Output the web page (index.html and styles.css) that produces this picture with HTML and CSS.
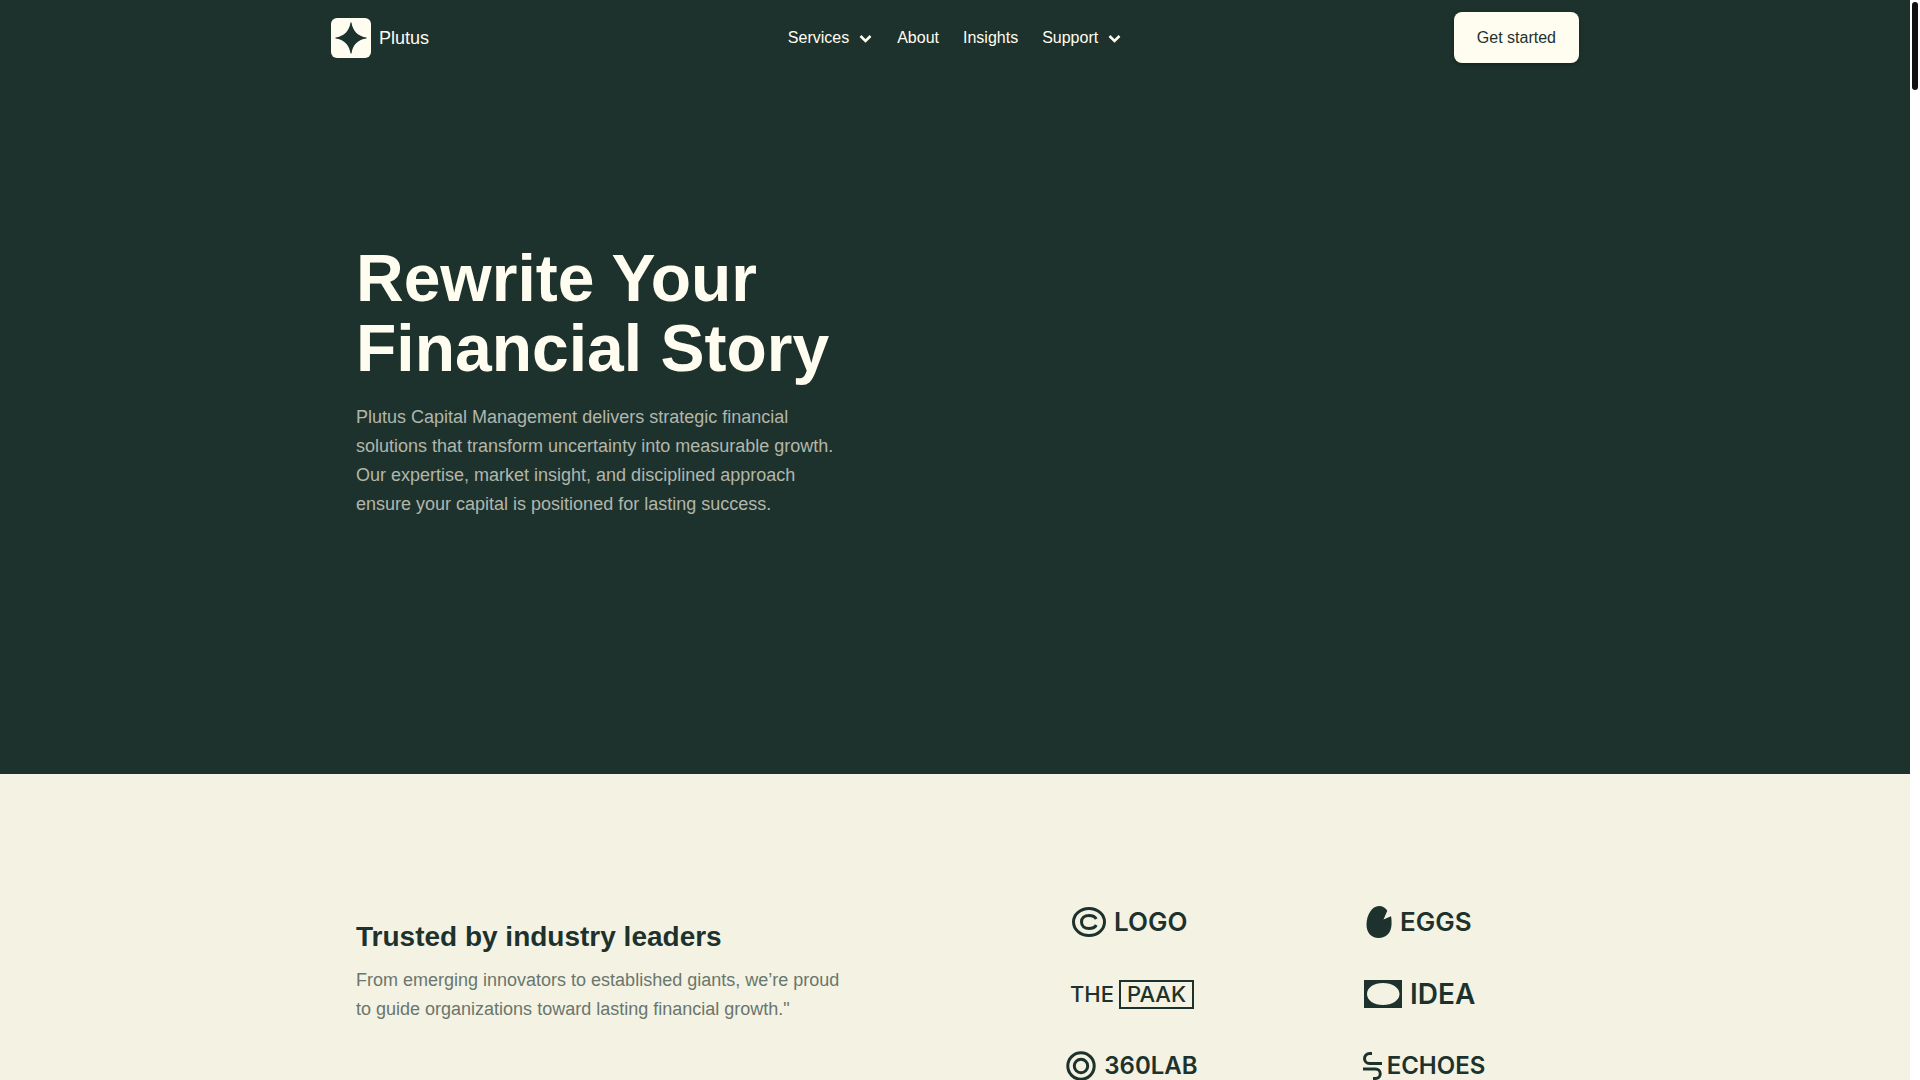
FILE: index.html
```html
<!DOCTYPE html>
<html lang="en">
<head>
<meta charset="utf-8">
<meta name="viewport" content="width=device-width, initial-scale=1">
<title>Plutus Capital Management</title>
<link rel="stylesheet" href="styles.css">
</head>
<body>
<div class="viewport">
  <div class="page">
    <div class="dark">
      <header class="header">
        <a class="brand" href="#">
          <svg class="brand-mark" viewBox="0 0 40 40" aria-hidden="true">
            <rect width="40" height="40" rx="6" fill="#fffcf0"/>
            <path d="M19.500 4.500H20.500C21.500 12.500 27 18.500 35.500 19.500V20.500C27 21.500 21.500 27 20.500 35.500H19.500C18.500 27 13 21.500 4.500 20.500V19.500C13 18.500 18.500 12.500 19.500 4.500Z" fill="#1e322d"/>
          </svg>
          <span>Plutus</span>
        </a>
        <nav class="nav" aria-label="Main">
          <button class="nav-item" type="button">Services
            <svg class="chevron" viewBox="0 0 16 16" aria-hidden="true"><path d="M3.500 6L8.500 11L13.500 6"/></svg>
          </button>
          <a class="nav-item" href="#">About</a>
          <a class="nav-item" href="#">Insights</a>
          <button class="nav-item" type="button">Support
            <svg class="chevron" viewBox="0 0 16 16" aria-hidden="true"><path d="M3.500 6L8.500 11L13.500 6"/></svg>
          </button>
        </nav>
        <button class="cta" type="button">Get started</button>
      </header>
      <section class="hero">
        <div class="copy">
          <h1 class="hero-title">Rewrite Your Financial Story</h1>
          <p class="lead lead-light">Plutus Capital Management delivers strategic financial solutions that transform uncertainty into measurable growth. Our expertise, market insight, and disciplined approach ensure your capital is positioned for lasting success.</p>
        </div>
      </section>
    </div>
    <section class="trusted">
      <div class="copy trusted-copy">
        <h2 class="trusted-title">Trusted by industry leaders</h2>
        <p class="lead lead-dark">From emerging innovators to established giants, we’re proud to guide organizations toward lasting financial growth."</p>
      </div>
      <div class="logos">
        <div class="logo">
          <svg width="34" height="30" viewBox="0 0 34 30" fill="none" stroke="#1e322d" stroke-width="3" aria-hidden="true">
            <ellipse cx="17" cy="15" rx="15.500" ry="13.500"/>
            <path d="M24.200 12C23 9.500 20.300 8.500 17 8.500C12.500 8.500 9.500 11 9.500 15S12.500 21.500 17 21.500C20.300 21.500 23 20.500 24.200 18"/>
          </svg>
          <span class="wide">LOGO</span>
        </div>
        <div class="logo">
          <svg width="28" height="32" viewBox="-2 0 28 32" aria-hidden="true">
            <path d="M13 0C16.500 0 19.500 2 21.300 4.800L17.500 13.500L25 10.300C25.500 12.500 25.700 15 25.500 19C25 27 20 32 12.700 32C5 32 0.500 26.500 0.500 18.500C0.500 9 6 0 13 0Z" fill="#1e322d"/>
          </svg>
          <span class="wide">EGGS</span>
        </div>
        <div class="logo logo-tight">
          <span class="plain">THE</span>
          <span class="plain boxed">PAAK</span>
        </div>
        <div class="logo">
          <svg width="38" height="28" viewBox="0 0 38 28" aria-hidden="true">
            <path fill-rule="evenodd" d="M0 0H38V28H0ZM19 3C10 3 3 7.500 3 14S10 25 19 25S35.500 20.500 35.500 14S28 3 19 3Z" fill="#1e322d"/>
          </svg>
          <span class="wide wider">IDEA</span>
        </div>
        <div class="logo">
          <svg width="30" height="30" viewBox="0 0 30 30" fill="none" stroke="#1e322d" stroke-width="3" aria-hidden="true">
            <circle cx="15" cy="15" r="13.200"/><circle cx="15" cy="15" r="6.700"/>
          </svg>
          <span class="plain strong">360LAB</span>
        </div>
        <div class="logo logo-tight">
          <svg width="19" height="28" viewBox="0 0 19 28" fill="none" stroke="#1e322d" stroke-width="3" aria-hidden="true">
            <path d="M9 1.500H6.500A5 5 0 0 0 6.500 11.500H19M0 17H12.500A4.700 4.700 0 0 1 12.500 26.500H10"/>
          </svg>
          <span class="plain strong">ECHOES</span>
        </div>
      </div>
    </section>
  </div>
  <div class="rail" aria-hidden="true"><div class="thumb"></div></div>
</div>
</body>
</html>
```
FILE: styles.css
```css
* { box-sizing: border-box; }

body {
  margin: 0;
  font-family: "Liberation Sans", Arial, sans-serif;
  color: #1e322d;
  background: #f4f2e3;
}

h1, h2, p { margin: 0; }

button {
  font: inherit;
  color: inherit;
  border: 0;
  background: none;
  padding: 0;
  cursor: pointer;
}

a { color: inherit; text-decoration: none; }

.viewport {
  display: grid;
  grid-template-columns: minmax(0, 1fr) 10px;
  height: 100vh;
  overflow: hidden;
}

.page { overflow: hidden; }

.rail { background: #fff; padding: 2px; }

.thumb {
  height: 88px;
  border-radius: 3px;
  background: #111;
}

.dark { background: #1e322d; color: #fffcf0; }

.header {
  max-width: 1248px;
  margin: 0 auto;
  padding: 12px 0;
  display: grid;
  grid-template-columns: 1fr auto 1fr;
  align-items: center;
}

.brand {
  display: flex;
  align-items: center;
  gap: 8px;
  font-size: 18px;
  line-height: 28px;
}

.brand-mark { width: 40px; height: 40px; }

.nav {
  display: flex;
  align-items: center;
  gap: 24px;
  font-size: 16px;
  line-height: 24px;
}

.nav-item { display: flex; align-items: center; gap: 8px; }

.chevron {
  width: 16px;
  height: 16px;
  fill: none;
  stroke: #fffcf0;
  stroke-width: 2.5;
}

.cta {
  justify-self: end;
  padding: 13px 23px;
  font-size: 16px;
  line-height: 25px;
  color: #1e322d;
  background: #fffcf0;
  border-radius: 8px;
  box-shadow: 0 2px 4px rgba(0, 0, 0, 0.3);
}

.hero {
  max-width: 1198px;
  margin: 0 auto;
  padding: 168px 0 255px;
}

.copy {
  display: flex;
  flex-direction: column;
  max-width: 490px;
}

.hero .copy { gap: 20px; }

.hero-title { font-size: 66px; line-height: 70px; }

.lead { font-size: 18px; line-height: 29px; }

.lead-light { color: #b2b6ab; }

.lead-dark { color: #69766d; }

.trusted {
  max-width: 1198px;
  margin: 0 auto;
  padding: 128px 0;
  display: flex;
  justify-content: space-between;
  align-items: flex-start;
}

.trusted-copy { gap: 12px; padding-top: 18px; }

.trusted-title { font-size: 28px; line-height: 34px; }

.logos {
  display: grid;
  grid-template-columns: 260px 260px;
  justify-items: center;
  gap: 32px;
}

.logo {
  display: flex;
  align-items: center;
  gap: 8px;
  min-width: 120px;
  height: 40px;
}

.logo-tight { gap: 5px; }

.wide { font: 600 26px/28px Inter, sans-serif; }

.wider { font-size: 28px; }

.plain { font: 500 22px/25px Inter, sans-serif; }

.strong { font-size: 24px; line-height: 24px; font-weight: 600; }

.boxed { border: 2px solid #1e322d; padding: 0 6px; }
```
